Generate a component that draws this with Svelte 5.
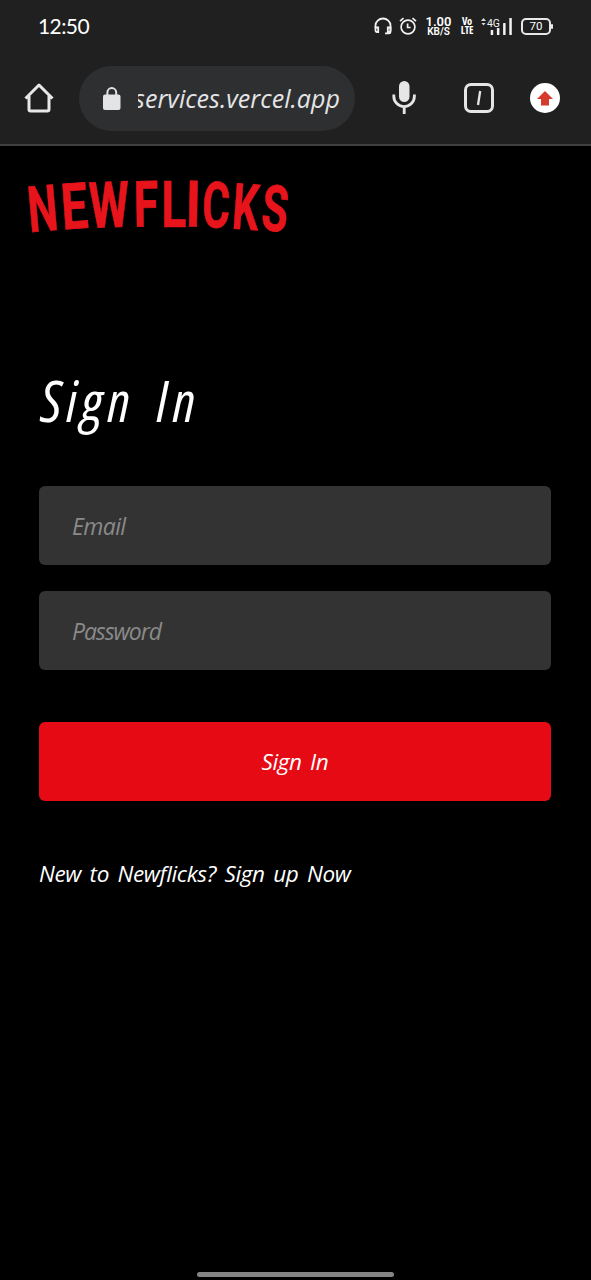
<script lang="ts">
  const letters = [
    { c: 'N', x: 44.5, y: 231, r: -5, s: 0.66 },
    { c: 'E', x: 76, y: 228.5, r: -4, s: 0.74 },
    { c: 'W', x: 110, y: 227.3, r: -2, s: 0.72 },
    { c: 'F', x: 146.5, y: 226.5, r: -1, s: 0.7 },
    { c: 'L', x: 174, y: 226.5, r: 0, s: 0.72 },
    { c: 'I', x: 193, y: 226.5, r: 1, s: 0.8 },
    { c: 'C', x: 215.5, y: 227.5, r: 2, s: 0.66 },
    { c: 'K', x: 244.5, y: 229.5, r: 4, s: 0.65 },
    { c: 'S', x: 273.5, y: 231, r: 5, s: 0.67 }
  ];
  const bars = [5, 7, 12, 17];
</script>

<div class="screen">
  <header>
    <div class="status">
      <span class="time">12:50</span>
      <div class="indicators">
        <svg class="headset" width="18" height="18" viewBox="0 0 18 18" fill="none" stroke="#f2f2f2" stroke-width="1.8">
          <path d="M1.500 11V8.500a7.500 7 0 0 1 15 0V15q0 1.300-1.500 1.300H11" />
          <path d="M1.500 10.500h2.700v4.500H3Q1.500 15 1.500 13.500zM16.500 10.500h-2.700v4.500h1.200Q16.500 15 16.500 13.500z" />
        </svg>
        <svg class="alarm" width="18" height="18" viewBox="0 0 18 18" fill="none" stroke="#f2f2f2" stroke-width="1.700">
          <circle cx="9" cy="10" r="6.900" /><path d="M1 4.200 4.500 1.200M17 4.200 13.500 1.200M8.600 6.500v4h3" />
        </svg>
        <div class="speed"><b>1.00</b><span>KB/S</span></div>
        <div class="volte"><span>Vo</span><span>LTE</span></div>
        <div class="signal">
          <svg width="31" height="18" viewBox="0 0 31 18">
            <path d="M0 4 2.500 1 5 4zM0.500 6h4L2.500 8.500z" fill="#ddd" />
            <text x="6" y="9.500" font-size="11" textLength="13" lengthAdjust="spacingAndGlyphs" fill="#f2f2f2">4G</text>
            {#each bars as h, i}
              <rect x={9.700 + i * 6.200} y={18 - h} width="2.500" height={h} rx=".6" fill="#f2f2f2" />
            {/each}
          </svg>
        </div>
        <div class="battery">70</div>
      </div>
    </div>
    <div class="toolbar">
      <svg class="home" width="30" height="30" viewBox="0 0 30 30" fill="none" stroke="#e8e8e8" stroke-width="3" stroke-linejoin="round">
        <path d="M1.500 15.500 15 2l13.500 13.500M5 13v13.300q0 1.700 1.700 1.700h16.600q1.700 0 1.700-1.700V13" />
      </svg>
      <div class="address">
        <svg width="18" height="24" viewBox="0 0 18 24">
          <rect y="7.500" width="17.500" height="15.500" rx="2" fill="#e4e4e7" /><path d="M4.400 9V5.500a4.400 4.400 0 0 1 8.800 0V9" fill="none" stroke="#e4e4e7" stroke-width="2" />
        </svg>
        <div class="url"><span>services.vercel.app</span></div>
      </div>
      <svg class="mic" width="24" height="34" viewBox="0 0 24 34">
        <rect x="7" y="0" width="10.500" height="21" rx="5.250" fill="#e6e6e6" />
        <path d="M1.800 13.500v1.800a10.300 10.300 0 0 0 20.600 0v-1.800M12.200 25v8" fill="none" stroke="#e6e6e6" stroke-width="2.800" />
      </svg>
      <div class="tabs"><svg width="10" height="16" viewBox="0 0 10 16"><path d="M6.200 1 4 15" stroke="#e6e6e6" stroke-width="2.300" /></svg></div>
      <div class="update"><svg width="16" height="15" viewBox="0 0 16 15"><path d="M8 0 16 8h-4v6.500H4V8H0z" fill="#d63a2d" /></svg></div>
    </div>
  </header>

  <main>
    <svg class="logo" width="290" height="94" viewBox="14 161 290 94" role="img" aria-label="Newflicks">
      {#each letters as l}
        <text transform="translate({l.x} {l.y}) rotate({l.r}) scale({l.s} 1)" text-anchor="middle">{l.c}</text>
      {/each}
    </svg>
    <h1>Sign In</h1>
    <form>
      <input type="email" placeholder="Email" />
      <input class="password" type="password" placeholder="Password" />
      <button type="button">Sign In</button>
    </form>
    <p>New to Newflicks? Sign up Now</p>
  </main>
  <div class="gesture"></div>
</div>

<style>
  :global(body) { background: #000; }
  .screen { box-sizing: border-box; width: 591px; height: 1280px; overflow: hidden; background: #000; color: #fff; font-family: "Open Sans", sans-serif; display: flex; flex-direction: column; }
  header { box-sizing: border-box; height: 146px; flex: none; background: #202020; border-bottom: 2px solid #404042; }
  .status { height: 52px; display: flex; align-items: center; justify-content: space-between; padding: 0 40px 0 38px; }
  .time { font: 21px/24px Lato, sans-serif; letter-spacing: -.6px; }
  .indicators { display: flex; align-items: center; }
  .alarm { margin-left: 7px; }
  .speed { margin-left: 8px; width: 27px; display: flex; flex-direction: column; align-items: center; font-family: Roboto, sans-serif; }
  .speed b { font-size: 13px; line-height: 11px; font-weight: 600; }
  .speed span { font-size: 10px; line-height: 9px; font-weight: 600; }
  .volte { margin-left: 8px; width: 14px; display: flex; flex-direction: column; align-items: center; font: 700 10.500px/9px "Open Sans", sans-serif; font-stretch: 75%; letter-spacing: -.3px; }
  .signal { margin-left: 7px; height: 18px; }
  .signal svg { display: block; }
  .signal text { font-family: Roboto, sans-serif; }
  .battery { box-sizing: border-box; position: relative; margin-left: 9px; width: 30px; height: 17px; border: 2px solid #e8e8e8; border-radius: 5px; text-align: center; font: 11.500px/13px Roboto, sans-serif; }
  .battery::after { content: ""; position: absolute; left: 28px; top: 4px; width: 2px; height: 5px; background: #e8e8e8; border-radius: 1px; }
  .toolbar { display: flex; align-items: center; height: 92px; padding-left: 24px; }
  .address { box-sizing: border-box; margin-left: 25px; width: 276px; height: 65px; border-radius: 33px; background: #2e2f31; display: flex; align-items: center; padding-left: 24px; margin-top: 1px; }
  .url { margin-left: 17px; width: 202px; height: 40px; overflow: hidden; display: flex; justify-content: flex-end; font: italic 25px/38px "Open Sans", sans-serif; color: #e4e4e6; letter-spacing: .05px; }
  .mic { margin-left: 37px; }
  .tabs { box-sizing: border-box; width: 30px; height: 30px; margin-left: 48px; border: 3px solid #e6e6e6; border-radius: 7px; display: grid; place-items: center; }
  .update { width: 30px; height: 30px; margin-left: 36px; border-radius: 50%; background: #fff; display: grid; place-items: center; }
  main { flex: 1; padding: 15px 40px 0 39px; }
  .logo { display: block; margin-left: -25px; }
  .logo text { font: 700 64px Roboto, sans-serif; fill: #e8141b; stroke: #e8141b; stroke-width: .7px; }
  h1 { margin: 107px 0 0; padding-left: 2px; height: 76px; font: italic 500 56px/76px "Open Sans", sans-serif; font-stretch: 75%; letter-spacing: 4.500px; word-spacing: 8px; white-space: nowrap; }
  form { display: flex; flex-direction: column; margin-top: 48px; }
  input, button { box-sizing: border-box; width: 512px; height: 78.500px; border: 0; border-radius: 6px; font: italic 23px/30px "Open Sans", sans-serif; }
  input { background: #333; padding: 2px 33px 0; color: #fff; letter-spacing: -.6px; }
  input::placeholder { color: #8a8a8a; opacity: 1; }
  .password { margin-top: 26.500px; letter-spacing: -1.100px; }
  button { margin-top: 52.500px; padding: 2px 0 0; background: #e60a14; color: #fff; font-size: 22.500px; letter-spacing: -.4px; word-spacing: 3px; }
  p { margin: 57px 0 0; font: italic 22.500px/32px "Open Sans", sans-serif; letter-spacing: -.35px; word-spacing: 3px; white-space: nowrap; }
  .gesture { flex: none; align-self: center; width: 197px; height: 5px; margin-bottom: 3px; border-radius: 3px; background: #858585; }
</style>
